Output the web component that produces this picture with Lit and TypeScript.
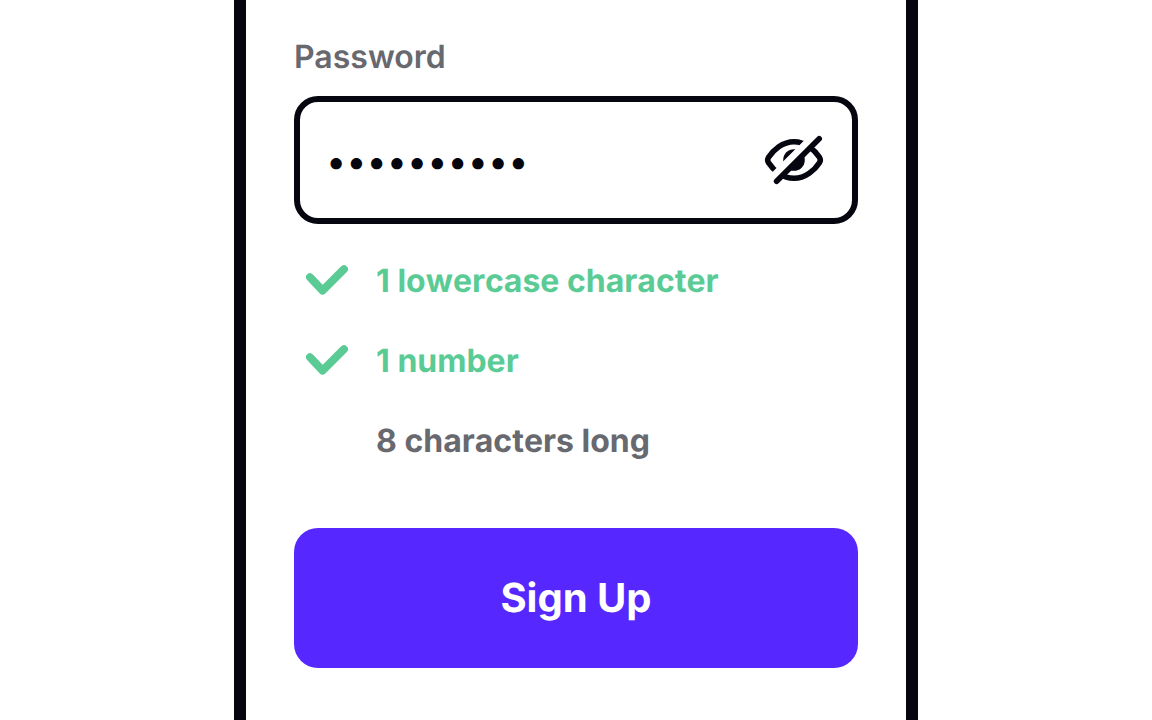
import { LitElement, html, css, nothing } from "lit";
import { customElement, property, state } from "lit/decorators.js";

@customElement("rule-item")
class RuleItem extends LitElement {
  @property({ type: Boolean, reflect: true }) met = false;

  static styles = css`
    :host {
      display: grid;
      grid-template-columns: 42px 1fr;
      column-gap: 28px;
      align-items: center;
      color: #68686f;
      font-weight: 700;
      line-height: 40px;
      font-kerning: none;
    }
    :host([met]) {
      color: #5bcb95;
    }
    .mark {
      display: block;
      height: 32px;
    }
    .mark svg {
      display: block;
    }
  `;

  render() {
    return html`
      <span class="mark">
        ${this.met
          ? html`<svg width="42" height="30" viewBox="0 0 42 30" fill="none" stroke="currentColor" stroke-width="8" stroke-linecap="round" stroke-linejoin="round" aria-hidden="true">
              <path d="M4 12.2 L16.5 25.6 L38 4.2" />
            </svg>`
          : nothing}
      </span>
      <span><slot></slot></span>
    `;
  }
}

@customElement("app-root")
class AppRoot extends LitElement {
  @state() private visible = false;

  static styles = css`
    :host {
      display: block;
      min-height: 100vh;
      background: #fff;
      color: #05060f;
      font-family: Inter, "Liberation Sans", sans-serif;
      font-size: 32px;
      text-rendering: geometricPrecision;
    }
    * {
      box-sizing: border-box;
    }
    .panel {
      max-width: 684px;
      min-height: 100vh;
      margin: 0 auto;
      padding: 37px 48px;
      border: solid #05060f;
      border-width: 0 12px;
    }
    label {
      display: block;
      margin-bottom: 19px;
      color: #68686f;
      font-weight: 600;
      line-height: 40px;
    }
    .field {
      display: flex;
      align-items: center;
      height: 128px;
      padding: 0 28px 0 26px;
      border: 6px solid #05060f;
      border-radius: 24px;
    }
    input {
      flex: 1;
      min-width: 0;
      height: 60px;
      padding: 2px 0 0;
      border: 0;
      outline: 0;
      background: none;
      color: inherit;
      font: inherit;
      font-size: 36px;
    }
    button {
      border: 0;
      padding: 0;
      font: inherit;
      text-rendering: inherit;
      cursor: pointer;
    }
    .toggle {
      background: none;
      color: inherit;
    }
    .toggle svg {
      display: block;
    }
    .rules {
      display: grid;
      gap: 40px;
      margin: 0;
      padding: 37px 12px 67px;
      list-style: none;
    }
    .submit {
      width: 100%;
      height: 140px;
      padding-bottom: 2px;
      border-radius: 24px;
      background: #5628ff;
      color: #fff;
      font-size: 40px;
      font-weight: 700;
    }
  `;

  render() {
    return html`
      <form class="panel" @submit=${(e: Event) => e.preventDefault()}>
        <label for="password">Password</label>
        <div class="field">
          <input id="password" type=${this.visible ? "text" : "password"} value="abcdefgh12" />
          <button class="toggle" type="button" aria-label="Show password" @click=${() => (this.visible = !this.visible)}>
            <svg width="60" height="50" viewBox="0 0 60 50" fill="none" stroke="currentColor" stroke-width="5.6" stroke-linecap="round">
              <clipPath id="slash-gap">
                <path d="M0 0 H45.6 L0 45.6 Z M60 0 V50 H9 L59 0 Z" />
              </clipPath>
              <g clip-path="url(#slash-gap)">
                <path d="M30 6.7 C41.5 6.7 50.6 14.8 55.6 22.6 Q57 25 55.6 27.4 C50.6 35.2 41.5 43.3 30 43.3 C18.5 43.3 9.4 35.2 4.4 27.4 Q3 25 4.4 22.6 C9.4 14.8 18.5 6.7 30 6.7 Z" />
                <circle cx="30" cy="25" r="10.8" fill="currentColor" stroke="none" />
              </g>
              <path d="M12.6 46.2 L55.2 3.8" />
            </svg>
          </button>
        </div>
        <ul class="rules">
          <li><rule-item met>1 lowercase character</rule-item></li>
          <li><rule-item met>1 number</rule-item></li>
          <li><rule-item>8 characters long</rule-item></li>
        </ul>
        <button class="submit" type="submit">Sign Up</button>
      </form>
    `;
  }
}
